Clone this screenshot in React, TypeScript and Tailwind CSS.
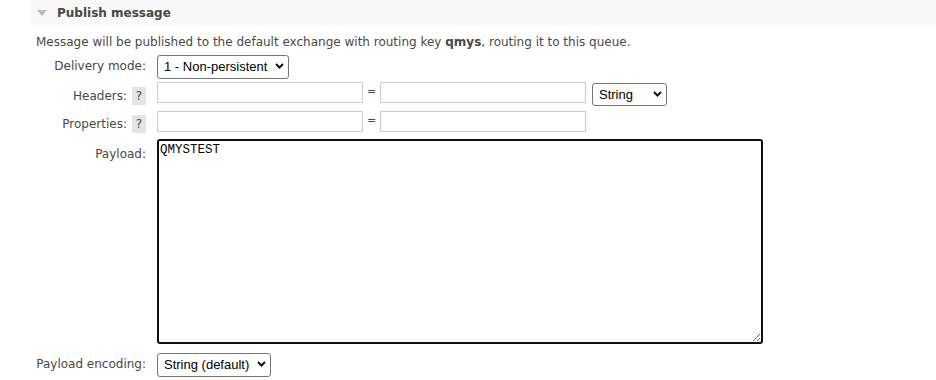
import { ReactNode } from 'react';

const labelFont = { fontFamily: '"DejaVu Sans", Verdana, sans-serif' };

const Chevron = () => (
  <svg
    width="9"
    height="6"
    viewBox="0 0 9 6"
    className="pointer-events-none absolute right-[5px] top-1/2 -translate-y-1/2"
  >
    <path d="M1 1l3.5 3.5L8 1" fill="none" stroke="#111" strokeWidth="2" />
  </svg>
);

const Select = ({ options, className }: { options: string[]; className: string }) => (
  <div className={`relative ${className}`}>
    <select
      className="h-full w-full appearance-none rounded-[3px] border border-[#767676] bg-white pl-[6px] text-[13px] text-black outline-none"
      style={{ fontFamily: '"Liberation Sans", Arial, sans-serif' }}
    >
      {options.map(o => (
        <option key={o}>{o}</option>
      ))}
    </select>
    <Chevron />
  </div>
);

const Help = () => (
  <span className="ml-[5px] inline-flex h-[18px] w-[14px] items-center justify-center bg-[#e4e4e4] text-[12px] text-[#484848]">
    ?
  </span>
);

const Row = ({ label, children, labelClass = '' }: { label: ReactNode; children: ReactNode; labelClass?: string }) => (
  <div className="flex">
    <div className={`flex w-[121px] shrink-0 justify-end whitespace-nowrap pr-[11px] text-[12px] text-[#484848] ${labelClass}`}>
      {label}
    </div>
    {children}
  </div>
);

const TextBox = () => (
  <input className="h-[21px] w-[206px] border border-[#cccccc] bg-white px-1 text-[12px] outline-none" />
);

export default function App() {
  return (
    <div className="h-[380px] w-[936px] overflow-hidden bg-white text-[#484848]" style={labelFont}>
      {/* Titre de section */}
      <div className="ml-[31px] flex h-[25px] items-center bg-[#f8f8f8]">
        <svg width="10" height="6" viewBox="0 0 10 6" className="ml-[6px] mt-[1px]">
          <path d="M0 0h10L5 6z" fill="#bbbbbb" />
        </svg>
        <span className="ml-[10px] text-[12px] font-bold text-[#484848]">Publish message</span>
      </div>

      <p className="ml-[36px] mt-[9px] text-[12px] leading-[16px]">
        Message will be published to the default exchange with routing key <b>qmys</b>, routing it to this queue.
      </p>

      <div className="ml-[36px] mt-[4px]">
        <Row label="Delivery mode:" labelClass="items-center">
          <Select options={['1 - Non-persistent', '2 - Persistent']} className="h-[24px] w-[132px]" />
        </Row>

        <div className="mt-[4px]">
          <Row
            labelClass="items-center h-[18px] mt-[5px]"
            label={
              <>
                <span>Headers:</span>
                <Help />
              </>
            }
          >
            <div className="flex items-start">
              <TextBox />
              <span className="w-[17px] pt-[2px] text-center text-[11px]">=</span>
              <TextBox />
              <Select options={['String', 'Number', 'Boolean', 'List']} className="ml-[6px] h-[23px] w-[75px]" />
            </div>
          </Row>
        </div>

        <div className="mt-[6px]">
          <Row
            labelClass="items-center h-[18px] mt-[4px]"
            label={
              <>
                <span>Properties:</span>
                <Help />
              </>
            }
          >
            <div className="flex items-start">
              <TextBox />
              <span className="w-[17px] pt-[2px] text-center text-[11px]">=</span>
              <TextBox />
            </div>
          </Row>
        </div>

        <div className="mt-[6px]">
          <Row label="Payload:" labelClass="pt-[7px] leading-[16px]">
            <textarea
              defaultValue="QMYSTEST"
              className="h-[205px] w-[606px] rounded-[3px] border-2 border-[#101010] bg-white px-[1px] pt-[2px] text-[12.5px] leading-[14px] text-black outline-none"
              style={{ fontFamily: '"Liberation Mono", "Courier New", monospace' }}
            />
          </Row>
        </div>

        <div className="mt-[8px]">
          <Row label="Payload encoding:" labelClass="items-center">
            <Select options={['String (default)', 'Base64']} className="h-[24px] w-[114px]" />
          </Row>
        </div>
      </div>
    </div>
  );
}
